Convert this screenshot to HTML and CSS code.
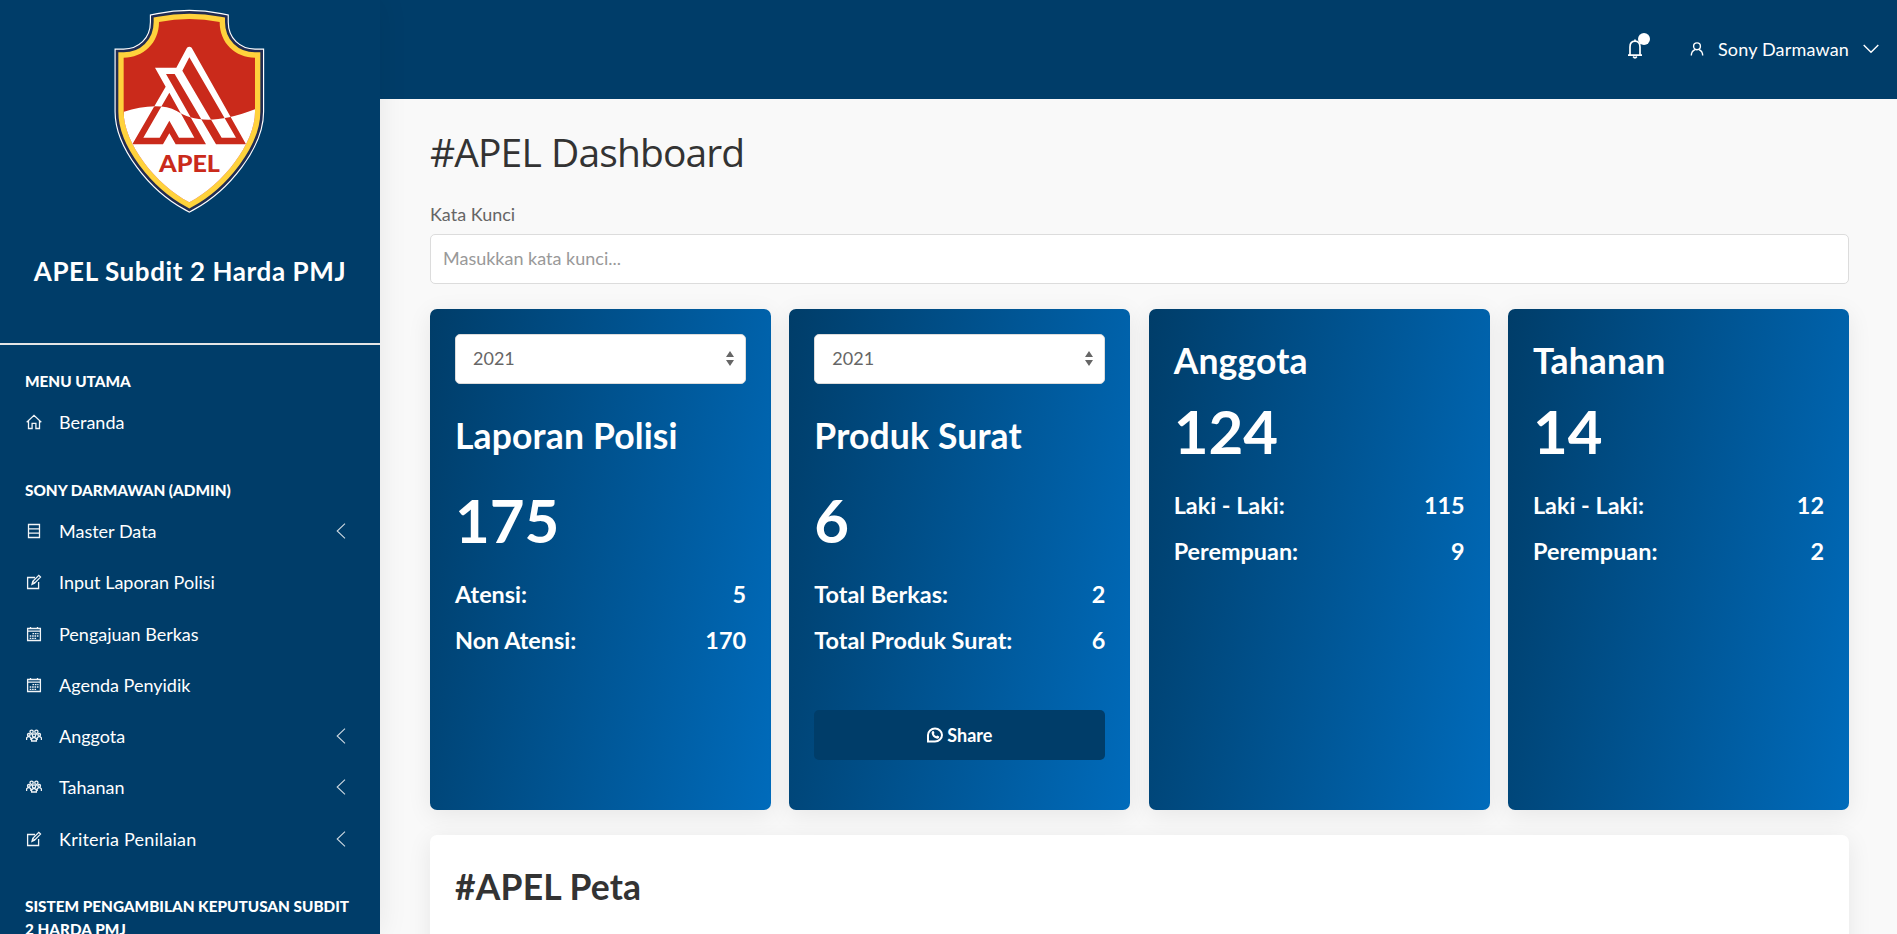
FILE: index.html
```html
<!DOCTYPE html>
<html lang="id">
<head>
<meta charset="utf-8">
<title>APEL Dashboard</title>
<link rel="stylesheet" href="styles.css">
</head>
<body>
<svg width="0" height="0" class="sprite">
  <defs>
    <symbol id="i-home" viewBox="0 0 16 16"><path d="M.7 8.2 8 1.3l7.300 6.900M2.500 7v7.500h3.600V9.400h3.800v5.100h3.600V7"/></symbol>
    <symbol id="i-server" viewBox="0 0 16 16"><path d="M2.500 1.500h11v13h-11zM2.500 5.800h11M2.500 10.200h11"/></symbol>
    <symbol id="i-edit" viewBox="0 0 16 16"><path d="M9 3.500H1.600v11h11V8M6 10.300l.8-3 6-5.900 1.700 1.700-6 6zM7 7.400l1.800 1.700"/></symbol>
    <symbol id="i-cal" viewBox="0 0 16 16"><path d="M1.600 2.500h12.800v12H1.600zM1.600 5.200h12.800M4.500 1v2M11.500 1v2"/><path class="dots" d="M6.500 7.600h6M3.700 10h8.800M3.700 12.300h6.500"/></symbol>
    <symbol id="i-group" viewBox="0 0 16 16"><circle cx="5.600" cy="3.700" r="1.600"/><circle cx="10.400" cy="3.700" r="1.600"/><circle cx="2.800" cy="6.800" r="1.300"/><circle cx="13.200" cy="6.800" r="1.300"/><circle cx="8" cy="7.400" r="1.600"/><path d="M.6 12V9.800q2-2.400 4.200 0V12M15.400 12V9.800q-2-2.400-4.200 0V12M5.600 13v-2q2.400-3 4.800 0v2zM4.400 6.500l1.500-.7M11.600 6.500l-1.500-.7"/></symbol>
    <symbol id="i-left" viewBox="0 0 10 16"><path d="M9 .6 1.200 8 9 15.400"/></symbol>
  </defs>
</svg>
<div class="app">
  <aside class="sidebar">
    <div class="brand">
      <svg class="crest" viewBox="0 0 510 675" width="170" height="225">
        <defs>
          <path id="shield" d="M162 66Q253 48 344 66C344 130 392 173 450 173V335C450 430 355 552 253 607C151 552 56 430 56 335V173C114 173 162 130 162 66Z"/>
          <path id="mark" fill-rule="evenodd" d="M246 143Q253 138 260 143L423 433H333L209 222H183L303 433H212L193 400 174 433H82L182 260 150 203H214ZM253 172 232 212 350 413H393ZM193 278 115 413H164L193 362 222 413H268Z"/>
          <clipPath id="inside"><use href="#shield"/></clipPath>
          <clipPath id="below"><path d="M0 345L57 335C110 318 175 310 215 333C260 362 330 375 450 328L510 310V675H0Z"/></clipPath>
        </defs>
        <use href="#shield" class="rim-white"/>
        <use href="#shield" class="rim-navy"/>
        <use href="#shield" class="rim-gold"/>
        <use href="#shield" class="red"/>
        <use href="#mark" class="white"/>
        <g clip-path="url(#inside)"><g clip-path="url(#below)"><rect width="510" height="675" class="white"/><use href="#mark" class="red"/></g></g>
        <text x="162" y="515" textLength="183" lengthAdjust="spacingAndGlyphs" class="crest-text">APEL</text>
      </svg>
      <div class="brand-name">APEL Subdit 2 Harda PMJ</div>
    </div>
    <nav class="menu">
      <h6 class="menu-head">MENU UTAMA</h6>
      <a class="item"><svg class="ico"><use href="#i-home"/></svg><span>Beranda</span></a>
      <h6 class="menu-head next">SONY DARMAWAN (ADMIN)</h6>
      <a class="item"><svg class="ico"><use href="#i-server"/></svg><span>Master Data</span><svg class="arrow"><use href="#i-left"/></svg></a>
      <a class="item"><svg class="ico"><use href="#i-edit"/></svg><span>Input Laporan Polisi</span></a>
      <a class="item"><svg class="ico"><use href="#i-cal"/></svg><span>Pengajuan Berkas</span></a>
      <a class="item"><svg class="ico"><use href="#i-cal"/></svg><span>Agenda Penyidik</span></a>
      <a class="item"><svg class="ico"><use href="#i-group"/></svg><span>Anggota</span><svg class="arrow"><use href="#i-left"/></svg></a>
      <a class="item"><svg class="ico"><use href="#i-group"/></svg><span>Tahanan</span><svg class="arrow"><use href="#i-left"/></svg></a>
      <a class="item"><svg class="ico"><use href="#i-edit"/></svg><span class="wide">Kriteria Penilaian</span><svg class="arrow"><use href="#i-left"/></svg></a>
      <h6 class="menu-head next">SISTEM PENGAMBILAN KEPUTUSAN SUBDIT 2 HARDA PMJ</h6>
    </nav>
  </aside>
  <div class="page">
    <header class="topbar">
      <div class="bell">
        <svg width="16" height="20" viewBox="0 0 16 20"><path d="M1 16.200h14M3 16V8Q3 2.200 8 2.200T13 8v8M8 2V.5M6.200 17.500q1.800 2.600 3.600 0"/></svg>
        <i class="dot"></i>
      </div>
      <div class="user">
        <svg width="14" height="14" viewBox="0 0 14 14"><circle cx="7" cy="4.300" r="3.400"/><path d="M1.300 13.500Q1.300 9.300 5 7.600M12.700 13.500Q12.700 9.300 9 7.600"/></svg>
        <span class="user-name">Sony Darmawan</span>
        <svg width="16" height="10" viewBox="0 0 16 10"><path d="M.7 1 8 8.300 15.300 1"/></svg>
      </div>
    </header>
    <main class="content">
      <h1 class="title">#APEL Dashboard</h1>
      <label class="label" for="q">Kata Kunci</label>
      <input class="search" id="q" placeholder="Masukkan kata kunci...">
      <section class="cards">
        <article class="card">
          <div class="select"><span>2021</span><svg width="8" height="15" viewBox="0 0 8 15"><path d="M0 6 4 0l4 6zM0 9h8l-4 6z"/></svg></div>
          <h2 class="name spaced">Laporan Polisi</h2>
          <div class="count tall">175</div>
          <div class="row"><span>Atensi:</span><span>5</span></div>
          <div class="row"><span>Non Atensi:</span><span>170</span></div>
        </article>
        <article class="card">
          <div class="select"><span>2021</span><svg width="8" height="15" viewBox="0 0 8 15"><path d="M0 6 4 0l4 6zM0 9h8l-4 6z"/></svg></div>
          <h2 class="name spaced">Produk Surat</h2>
          <div class="count tall">6</div>
          <div class="row"><span>Total Berkas:</span><span>2</span></div>
          <div class="row"><span>Total Produk Surat:</span><span>6</span></div>
          <button class="share"><svg width="16" height="16" viewBox="0 0 16 16"><path class="ring" d="M1 14.500V8a7 6.500 0 1 1 7 6.500H1z"/><path class="phone" d="M5.200 4.200 6.600 4l.9 2-.7 1q.8 1.500 2.400 2.200l1-.8 2 1-.2 1.300Q11 12 9.500 11.600 5.500 10.500 4.700 6.500 4.400 5 5.200 4.200z"/></svg><span>Share</span></button>
        </article>
        <article class="card">
          <h2 class="name">Anggota</h2>
          <div class="count">124</div>
          <div class="row"><span>Laki - Laki:</span><span>115</span></div>
          <div class="row"><span>Perempuan:</span><span>9</span></div>
        </article>
        <article class="card">
          <h2 class="name">Tahanan</h2>
          <div class="count">14</div>
          <div class="row"><span>Laki - Laki:</span><span>12</span></div>
          <div class="row"><span>Perempuan:</span><span>2</span></div>
        </article>
      </section>
      <section class="panel"><h2 class="name">#APEL Peta</h2></section>
    </main>
  </div>
</div>
</body>
</html>
```
FILE: styles.css
```css
* { box-sizing: border-box; }
body {
  margin: 0;
  height: 934px;
  overflow: hidden;
  background: #f9f9f9;
  color: #666;
  font-family: Lato, sans-serif;
  font-size: 18px;
}
h1, h2, h6 { margin: 0; }
svg { display: block; flex: none; fill: none; stroke: currentColor; }
.sprite { position: absolute; }
.app { display: flex; height: 934px; }

.sidebar {
  width: 380px;
  flex: none;
  overflow: hidden;
  background: #003d69;
  color: #fff;
  box-shadow: 0 0 28px rgba(0, 0, 0, .08);
  z-index: 1;
}
.brand {
  height: 345px;
  border-bottom: 2px solid #e5e5e5;
  display: flex;
  flex-direction: column;
  align-items: center;
}
.brand-name {
  margin-top: 26px;
  line-height: 40px;
  font-size: 26px;
  font-weight: 700;
  letter-spacing: .6px;
  white-space: nowrap;
}
.crest { stroke: none; }
.rim-white, .rim-navy, .rim-gold { stroke-linejoin: miter; }
.crest .rim-white { stroke: #fff; stroke-width: 55px; }
.crest .rim-navy { stroke: #212c52; stroke-width: 48px; }
.crest .rim-gold { stroke: #ffd23c; stroke-width: 32px; }
.crest .red { fill: #ca2a1b; }
.crest .white { fill: #fff; }
.crest-text { fill: #ca2a1b; font-size: 70px; font-weight: 900; }

.menu { padding-top: 25px; }
.menu-head {
  padding: 0 25px;
  font-size: 15.300px;
  line-height: 23px;
  font-weight: 900;
}
.menu-head.next { margin-top: 31px; }
.item {
  display: flex;
  align-items: center;
  height: 51.300px;
  padding: 0 34px 0 26px;
}
.menu-head + .item { margin-top: 3.500px; }
.item span { margin-left: 17px; flex: 1; }
.item .wide { letter-spacing: .2px; }
.ico { width: 16px; height: 16px; stroke-width: 1.300; opacity: .95; }
.dots { stroke-dasharray: 1.600 .8; }
.arrow { width: 10px; height: 16px; stroke-width: 1.100; opacity: .8; }

.page { flex: 1; display: flex; flex-direction: column; min-width: 0; }
.topbar {
  height: 99px;
  flex: none;
  background: #003d69;
  color: #fff;
  display: flex;
  justify-content: flex-end;
  align-items: center;
  gap: 47px;
  padding: 0 18px 2px 0;
}
.bell { position: relative; stroke-width: 1.700; }
.dot {
  position: absolute;
  left: 11px;
  top: -6px;
  width: 12px;
  height: 12px;
  border-radius: 50%;
  background: #fff;
}
.user { display: flex; align-items: center; stroke-width: 1.400; }
.user-name { margin: 0 14px 0 14px; letter-spacing: .17px; }

.content { padding: 0 48px 0 50px; }
.title {
  margin-top: 25px;
  font-family: "Open Sans", sans-serif;
  font-size: 39px;
  line-height: 56px;
  font-weight: 400;
  letter-spacing: -.9px;
  word-spacing: 1px;
  color: #333;
}
.label { display: block; margin-top: 21px; line-height: 27px; }
.search {
  display: block;
  width: 100%;
  height: 50px;
  margin-top: 6px;
  padding: 0 12px 2px;
  border: 1px solid #dcdcdc;
  border-radius: 5px;
  background: #fff;
  font: inherit;
}
.search::placeholder { color: #999; opacity: 1; }
.cards {
  display: grid;
  grid-template-columns: repeat(4, 1fr);
  gap: 18.300px;
  margin-top: 25px;
}
.card {
  height: 501px;
  padding: 25px;
  border-radius: 7px;
  color: #fff;
  background: linear-gradient(100deg, #003d69, #006bbb);
  box-shadow: 0 5px 25px rgba(0, 0, 0, .08);
}
.select {
  display: flex;
  align-items: center;
  justify-content: space-between;
  height: 50px;
  padding: 0 11px 2px 17px;
  border: 1px solid #dcdcdc;
  border-radius: 5px;
  background: #fff;
  color: #666;
}
.select svg { fill: #666; stroke: none; }
.name {
  padding-top: 1px;
  font-size: 35.500px;
  line-height: 52px;
  font-weight: 700;
  letter-spacing: .15px;
  white-space: nowrap;
}
.name.spaced { margin-top: 25px; }
.count { font-size: 60px; line-height: 90px; font-weight: 700; margin: -1px 0 6px; }
.count.tall { margin: 13px 0 6px; }
.row {
  display: flex;
  justify-content: space-between;
  height: 46px;
  line-height: 46px;
  font-size: 23.400px;
  font-weight: 700;
}
.share {
  display: flex;
  align-items: center;
  justify-content: center;
  gap: 4px;
  width: 100%;
  height: 50px;
  margin-top: 47px;
  border: 0;
  border-radius: 5px;
  background: #003d69;
  color: #fff;
  font: 700 18px Lato, sans-serif;
}
.ring { stroke-width: 2; }
.phone { fill: #fff; stroke: none; }
.panel {
  height: 400px;
  margin-top: 25px;
  padding: 25px;
  border-radius: 7px;
  background: #fff;
  color: #333;
  box-shadow: 0 5px 25px rgba(0, 0, 0, .08);
}
```
